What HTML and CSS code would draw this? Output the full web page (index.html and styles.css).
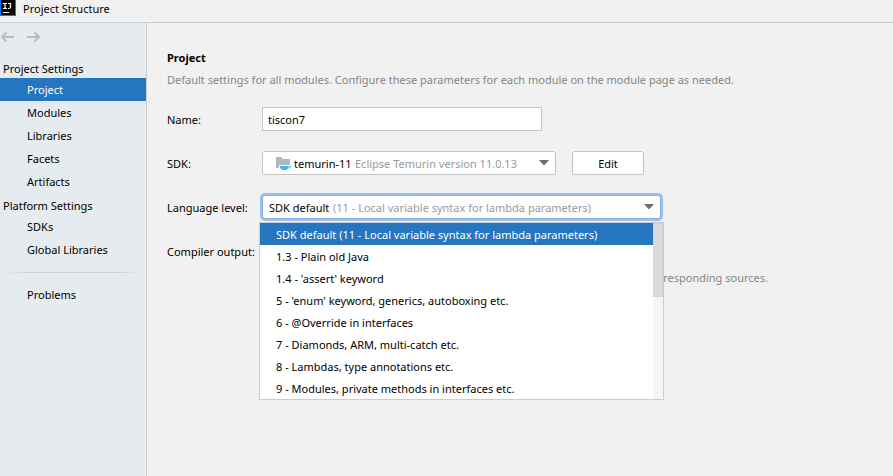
FILE: index.html
```html
<!DOCTYPE html>
<html lang="en">
<head>
<meta charset="utf-8">
<title>Project Structure</title>
<link rel="stylesheet" href="styles.css">
</head>
<body>
<header class="titlebar">
  <svg class="logo" width="16" height="16" viewBox="0 0 16 16" aria-hidden="true">
    <rect width="16" height="16" fill="#087cfa"/>
    <rect x="1" width="14" height="15" fill="#000"/>
    <path d="M3 3.500h4M5 3.500v5M3 8.500h4M8 3.500h2.500v3.500q0 1.500-1.500 1.500h-1" fill="none" stroke="#fff" stroke-width="1.200"/>
    <path d="M3 12.500h6" stroke="#fff"/>
  </svg>
  <span>Project Structure</span>
</header>
<div class="window">
  <aside class="sidebar">
    <div class="history">
      <button class="arrow" type="button" aria-label="Back"><svg width="14" height="12" viewBox="0 0 14 12"><path d="M14 6H2M6.500 1.500L2 6l4.500 4.500"/></svg></button>
      <button class="arrow" type="button" aria-label="Forward"><svg width="14" height="12" viewBox="0 0 14 12"><path d="M0 6H12M7.500 1.500L12 6l-4.500 4.500"/></svg></button>
    </div>
    <nav>
      <h2 class="group">Project Settings</h2>
      <a class="item selected" href="#project">Project</a>
      <a class="item" href="#modules">Modules</a>
      <a class="item" href="#libraries">Libraries</a>
      <a class="item" href="#facets">Facets</a>
      <a class="item" href="#artifacts">Artifacts</a>
      <h2 class="group">Platform Settings</h2>
      <a class="item" href="#sdks">SDKs</a>
      <a class="item" href="#global">Global Libraries</a>
      <hr class="divider">
      <a class="item" href="#problems">Problems</a>
    </nav>
  </aside>
  <main class="content" id="project">
    <h1 class="heading">Project</h1>
    <p class="note">Default settings for all modules. Configure these parameters for each module on the module page as needed.</p>
    <form class="form">
      <label for="name">Name:</label>
      <div class="field"><input class="text name" id="name" type="text" value="tiscon7"></div>

      <label for="sdk">SDK:</label>
      <div class="field">
        <div class="combo sdk">
          <svg class="folder" width="16" height="14" viewBox="0 0 16 14" aria-hidden="true">
            <path d="M1 1h5l2 2h7v6H4v3H1z" fill="#afb8be"/>
            <path d="M5 10h9q2 0 2 1t-3 1.500q-1 1.500-3 1.500H8q-3-.5-3-4z" fill="#40b6e0"/>
            <path d="M13 10.800h1.500v.7h-1.500z" fill="#fff"/>
          </svg>
          <select id="sdk"><option>temurin-11</option></select>
          <span class="hint">Eclipse Temurin version 11.0.13</span>
          <svg class="caret" width="10" height="6" viewBox="0 0 10 6" aria-hidden="true"><path d="M0 0h10L5 5.500z"/></svg>
        </div>
        <button class="edit" type="button">Edit</button>
      </div>

      <label for="level">Language level:</label>
      <div class="field">
        <div class="combo level">
          <select id="level"><option>SDK default</option></select>
          <span class="hint">(11 - Local variable syntax for lambda parameters)</span>
          <svg class="caret" width="10" height="6" viewBox="0 0 10 6" aria-hidden="true"><path d="M0 0h10L5 5.500z"/></svg>
          <div class="popup">
            <ul class="options" role="listbox" aria-label="Language level">
              <li class="selected" role="option" aria-selected="true">SDK default (11 - Local variable syntax for lambda parameters)</li>
              <li role="option">1.3 - Plain old Java</li>
              <li role="option">1.4 - 'assert' keyword</li>
              <li role="option">5 - 'enum' keyword, generics, autoboxing etc.</li>
              <li role="option">6 - @Override in interfaces</li>
              <li role="option">7 - Diamonds, ARM, multi-catch etc.</li>
              <li role="option">8 - Lambdas, type annotations etc.</li>
              <li role="option">9 - Modules, private methods in interfaces etc.</li>
            </ul>
            <div class="track"><div class="thumb"></div></div>
          </div>
        </div>
      </div>

      <label for="output">Compiler output:</label>
      <div class="field"><input class="text output" id="output" type="text"></div>
    </form>
    <p class="note under">responding sources.</p>
  </main>
</div>
</body>
</html>
```
FILE: styles.css
```css
* { box-sizing: border-box; }
body {
  margin: 0;
  min-height: 100vh;
  display: flex;
  flex-direction: column;
  background: #f1f1f1;
  color: #000;
  font: 11px/16px "Noto Sans", "Open Sans", sans-serif;
}
h1, h2, p, ul { margin: 0; padding: 0; font-size: inherit; font-weight: normal; }
button, input, select { font: inherit; color: inherit; }

.titlebar {
  display: flex;
  gap: 7px;
  height: 23px;
  border-bottom: 1px solid #cbcdce;
}
.titlebar span { line-height: 18px; }
.window { flex: 1; display: flex; }

.sidebar {
  flex: none;
  width: 147px;
  background: #e6ebef;
  border-right: 1px solid #cbcdcf;
}
.history { display: flex; gap: 13px; height: 33px; padding-top: 8px; }
.arrow { display: block; width: 14px; height: 12px; padding: 0; border: 0; background: none; }
.arrow svg { display: block; fill: none; stroke: #b9bcbf; stroke-width: 2; }
.group { height: 22px; padding: 5px 3px 0; line-height: 16px; }
.item {
  display: block;
  padding-left: 27px;
  line-height: 23px;
  color: inherit;
  text-decoration: none;
}
.selected { background: #2675bf; color: #fff; }
.divider {
  height: 1px;
  margin: 11px 6px 10px;
  border: 0;
  background: linear-gradient(90deg, transparent, #cfd3d6 15%, #cfd3d6 85%, transparent);
}

.content { flex: 1; padding: 27px 20px; }
.heading { font-weight: bold; }
.note { margin-top: 6px; color: #868686; }
.form {
  display: grid;
  grid-template-columns: 95px 1fr;
  grid-auto-rows: 24px;
  row-gap: 20px;
  align-items: center;
  margin-top: 19px;
}
.form label { padding-top: 2px; white-space: nowrap; }
.field { display: flex; gap: 16px; }
.text { height: 24px; padding: 0 5px; border: 1px solid #c4c4c4; background: #fff; outline: 0; }
.name { width: 280px; }
.output { width: 300px; }
.combo {
  position: relative;
  display: flex;
  align-items: center;
  gap: 3px;
  height: 24px;
  padding: 0 6px;
  border: 1px solid #c4c4c4;
  border-radius: 3px;
  background: #fff;
}
.combo select, .hint { padding: 2px 0 0; }
.combo select { appearance: none; border: 0; background: none; outline: 0; }
.sdk { width: 294px; padding-left: 12px; }
.level { width: 399px; border-color: #87afda; box-shadow: 0 0 0 2px #97c3f3; }
.hint { flex: 1; color: #999; white-space: nowrap; }
.caret { flex: none; fill: #6e6e6e; }
.edit { width: 72px; height: 24px; padding: 2px 0 0; border: 1px solid #c4c4c4; border-radius: 3px; background: #fff; }

.popup {
  position: absolute;
  top: 26px;
  left: -4px;
  z-index: 1;
  display: flex;
  width: 405px;
  border: 1px solid #cdcdcd;
  background: #fff;
}
.options { flex: 1; list-style: none; }
.options li { padding: 2px 0 0 16px; line-height: 20px; }
.track { width: 10px; background: #f5f5f5; }
.thumb { height: 74px; background: #dadada; border: 1px solid #d2d2d2; }
.under { width: 601px; margin-top: 7px; text-align: right; }
```
